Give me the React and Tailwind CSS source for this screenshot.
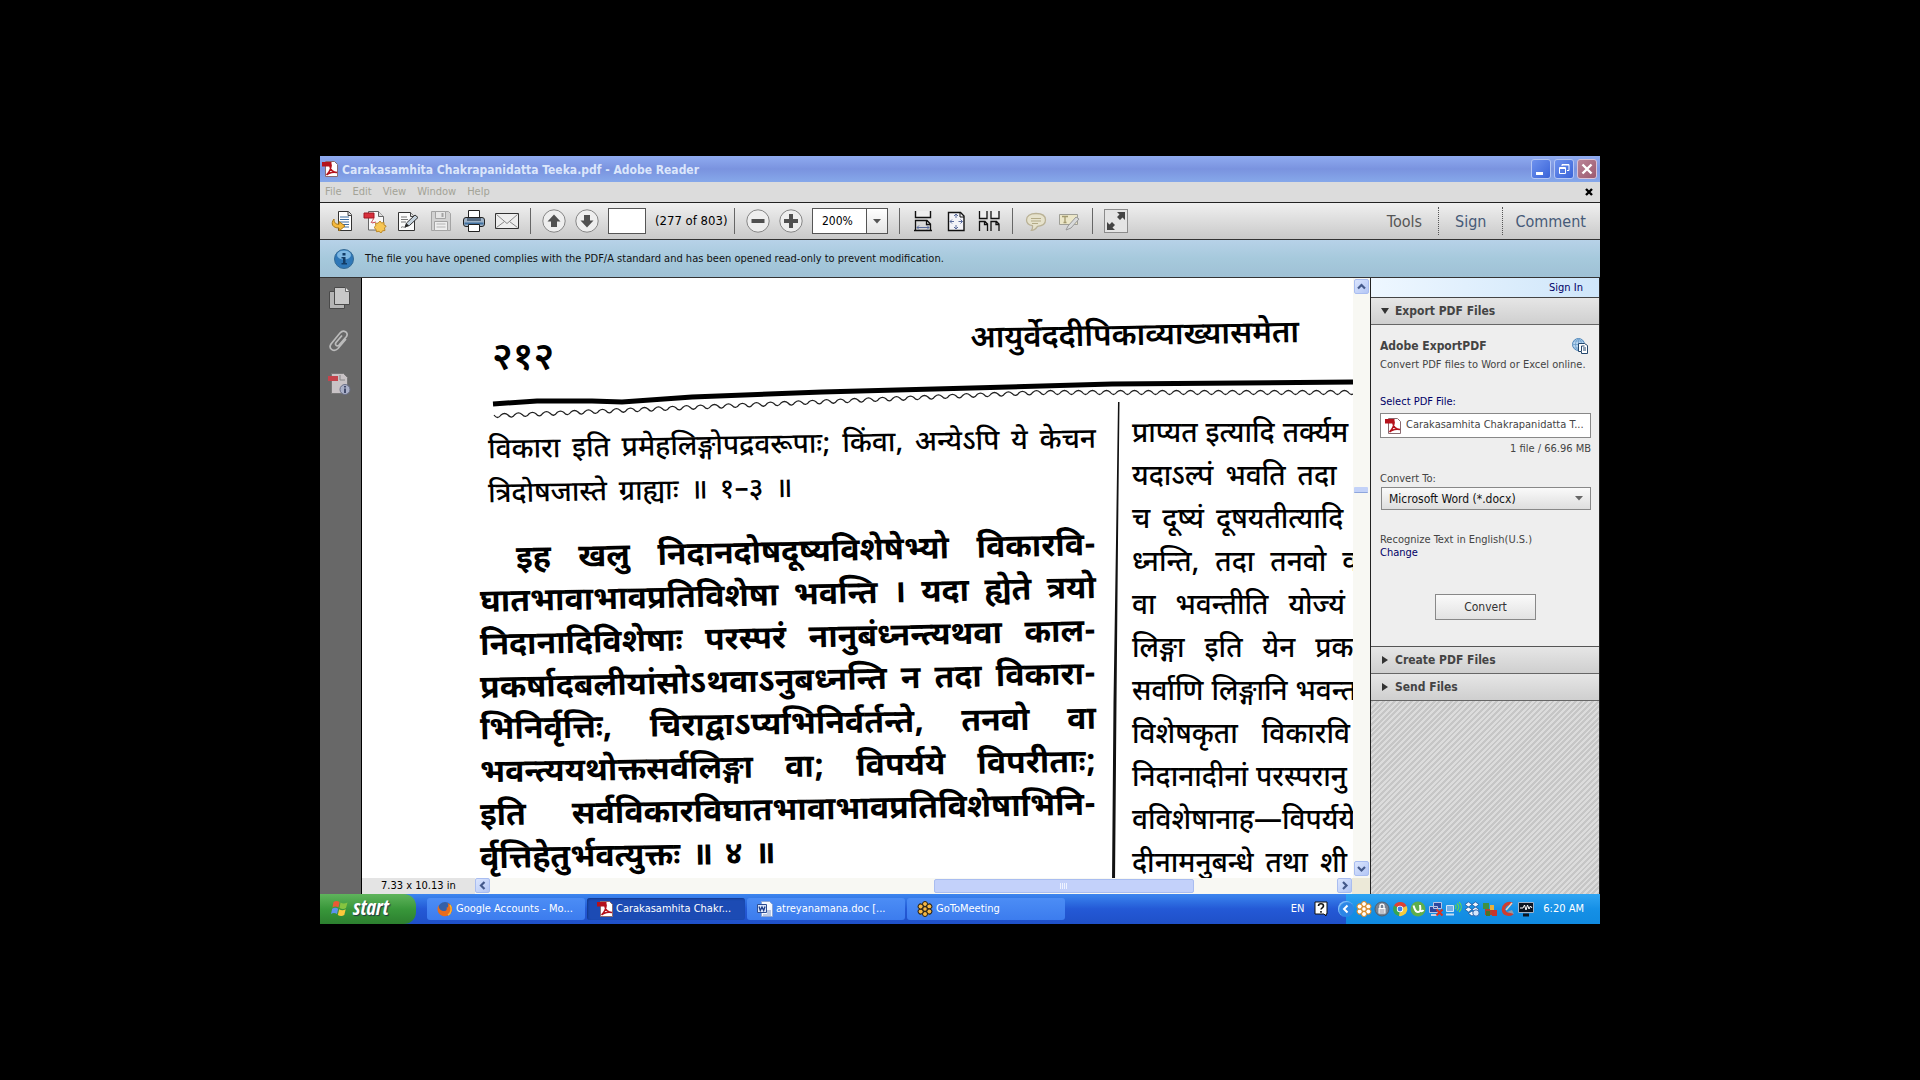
import React from "react";

const UI = "font-['DejaVu_Sans_Condensed','DejaVu_Sans',sans-serif] [font-stretch:condensed]";

function AcrobatIcon({ className }) {
  return (
    <svg viewBox="0 0 16 16" className={className} aria-hidden="true">
      <path d="M3.5.5h9l3 3v12h-12z" fill="#fff" stroke="#8a6a70" />
      <path d="M0 1h9.500v4.500H0z" fill="#b5121c" />
      <path d="M4.500 14C7 11.500 9 8 9 4.500c0-1.500-1.300-1.500-1.200 0C8 8.500 11 11.500 15 11.500c-3-.8-8-.3-10.500 2.500z" fill="none" stroke="#b5121c" strokeWidth="1.500" />
    </svg>
  );
}

function TitleBar() {
  return (
    <header className="flex h-[26px] shrink-0 items-center bg-linear-to-b from-[#8fabf0] via-[#7a93df] to-[#86a8ea] pr-[3px] pl-[2px]">
      <AcrobatIcon className="mr-1 size-4" />
      <h1 className="grow pt-px text-[12px] leading-4 font-bold whitespace-nowrap text-[#dbe6fb]">
        Carakasamhita Chakrapanidatta Teeka.pdf - Adobe Reader
      </h1>
      <div className="flex gap-[3px]">
        <button aria-label="Minimize" className="size-5 rounded-[3px] border border-[#b4c6f5] bg-linear-to-br from-[#6f92ee] to-[#3a63d8]">
          <svg viewBox="0 0 18 18"><path d="M4 12h7v3H4z" fill="#fff" /></svg>
        </button>
        <button aria-label="Restore" className="size-5 rounded-[3px] border border-[#b4c6f5] bg-linear-to-br from-[#6f92ee] to-[#3a63d8]">
          <svg viewBox="0 0 18 18" fill="none" stroke="#fff">
            <path d="M7 6V4.500h7v6h-2M7 5h7M4.500 7.500h6v6h-6zM4.500 8.500h6" />
          </svg>
        </button>
        <button aria-label="Close" className="size-5 rounded-[3px] border border-[#d9c3d8] bg-linear-to-br from-[#b98497] to-[#9c5a70]">
          <svg viewBox="0 0 18 18" stroke="#fff" strokeWidth="2.400"><path d="M4.500 4.500l9 9M13.500 4.500l-9 9" /></svg>
        </button>
      </div>
    </header>
  );
}

function MenuBar() {
  return (
    <nav className="flex h-5 shrink-0 items-center gap-[11px] bg-[#dcdcdc] pr-[7px] pl-[5px] text-[11px] text-[#a3a397]">
      {["File", "Edit", "View", "Window", "Help"].map((m) => (
        <button key={m}>{m}</button>
      ))}
      <button aria-label="Close document" className="ml-auto size-2">
        <svg viewBox="0 0 8 8" stroke="#000" strokeWidth="2.400"><path d="M1 1l6 6M7 1L1 7" /></svg>
      </button>
    </nav>
  );
}

const toolIcons = {
  Open: (
    <>
      <path d="M8.500 2.500h10l3 3v16h-13z" fill="#fff" stroke="#333" />
      <path d="M18 2.500v4h4" fill="#ddd" stroke="#444" />
      <path d="M10 8h9M10 10.500h9M10 13h9M12 15.500h7M14 18h5" stroke="#3d6c9d" />
      <path d="M4 10c-4 5-1 9 5 9v3l6-5-6-4.500v2.800c-3 .2-5-1.300-5-5.300z" fill="#f5b93e" stroke="#a97819" />
    </>
  ),
  "Create PDF": (
    <>
      <path d="M5.500 2.500h10l5 5v13.500h-15z" fill="#f8f8f8" stroke="#666" />
      <path d="M15.500 2.500v5h5" fill="#ddd" stroke="#666" />
      <path d="M1 4h10v5H1z" fill="#d8303c" stroke="#a01622" />
      <path d="M8 14c1-2 2-3 3-5M9 14l4-1" stroke="#c9444c" />
      <path d="M17 12l1.500 2 2.500-.5v2.500l2.200 1-1.700 2 .5 2.500-2.500.3L18 24l-2-1.700-2.500.5-.5-2.500L11 18.500l1.800-1.700-.3-2.500 2.600-.1z" fill="#f7c653" stroke="#bd8928" />
    </>
  ),
  Sign: (
    <>
      <path d="M2.500 3.500h12l4 4v14h-16z" fill="#fafafa" stroke="#333" />
      <path d="M14.500 3.500v4h4" fill="#ddd" stroke="#444" />
      <path d="M5 8h6M5 10.500h7M5 13h5M5 18.500c2-2 3 1 5-.5" stroke="#777" fill="none" />
      <path d="M9 18l1.500-4L19 6l3 2.500-8.500 8z" fill="#c5d2dd" stroke="#333" />
      <path d="M9 18l1.500-3.500 2.500 2z" fill="#222" />
    </>
  ),
  Save: (
    <>
      <path d="M2.500 2.500h17l2 2v17h-19z" fill="#d2d2d2" stroke="#a4a4a4" />
      <path d="M6.500 2.500h10v7h-10z" fill="#e6e6e6" stroke="#a4a4a4" />
      <path d="M12.500 4h2v4h-2z" fill="#a4a4a4" />
      <path d="M5.500 12.500h13v9h-13z" fill="#eee" stroke="#a4a4a4" />
      <path d="M7.500 15h9M7.500 18h9" stroke="#b4b4b4" />
    </>
  ),
  Print: (
    <>
      <path d="M6.500 9.500v-8h11v8" fill="#fff" stroke="#222" />
      <rect x="1.500" y="8.500" width="21" height="9" rx="2.500" fill="#9eb2c6" stroke="#222" />
      <path d="M5 9h14v3H5z" fill="#566a80" />
      <path d="M2.500 14.500h19" stroke="#3f6f9e" strokeWidth="2" />
      <path d="M6.500 15.500h11v7h-11z" fill="#fff" stroke="#222" />
    </>
  ),
  Email: (
    <>
      <path d="M.5 4.500h23v15H.5z" fill="#eee" stroke="#333" />
      <path d="M1.500 5.500l10.500 9 10.500-9M1.500 18.500l8-6M22.500 18.500l-8-6" fill="none" stroke="#888" />
    </>
  ),
  "Previous page": (
    <>
      <circle cx="12" cy="12" r="11.200" fill="#eee" stroke="#858585" />
      <path d="M12 5.500l6.500 7H15v5.500H9v-5.500H5.500z" fill="#505050" />
    </>
  ),
  "Next page": (
    <>
      <circle cx="12" cy="12" r="11.200" fill="#eee" stroke="#858585" />
      <path d="M12 18.500l6.500-7H15V6H9v5.500H5.500z" fill="#505050" />
    </>
  ),
  "Zoom out": (
    <>
      <circle cx="12" cy="12" r="11.200" fill="#eee" stroke="#858585" />
      <path d="M5.500 10h13v4h-13z" fill="#505050" />
    </>
  ),
  "Zoom in": (
    <>
      <circle cx="12" cy="12" r="11.200" fill="#eee" stroke="#858585" />
      <path d="M10 5h4v5h5v4h-5v5h-4v-5H5v-4h5z" fill="#505050" />
    </>
  ),
  "Fit width": (
    <>
      <path d="M4.500 2v6.500h15V2" fill="#eee" stroke="#111" strokeWidth="1.400" />
      <path d="M4.500 22V11.500H16l3.500 3.500v7M15.500 12v3.500H19M3 21.500h18" fill="none" stroke="#111" strokeWidth="1.300" />
      <path d="M6 18.500h12M8 16.500l-2 2 2 2M16 16.500l2 2-2 2" fill="none" stroke="#5a6b9c" />
    </>
  ),
  "Fit page": (
    <>
      <path d="M4.500 3.500h12l3.500 3.500v14.500H4.500z" fill="#f3f3f8" stroke="#111" strokeWidth="1.400" />
      <path d="M16 4v4h4" fill="none" stroke="#111" />
      <path d="M12 5v4M10 7l2-2 2 2M12 20v-4M10 18l2 2 2-2M6 12.500h4M8 10.500l-2 2 2 2M18.500 12.500h-4M16.500 10.500l2 2-2 2" fill="none" stroke="#5a6b9c" />
    </>
  ),
  "Two-up": (
    <>
      <path d="M2.500 2v7.500H10V2M14 2v7.500h8V2" fill="#eee" stroke="#111" strokeWidth="1.300" />
      <path d="M2.500 22V12.500H8l2.500 2.500v7M7.500 13v2.500H10M14 22V12.500h5.500L22 15v7M19 13v2.500h3" fill="none" stroke="#111" strokeWidth="1.300" />
    </>
  ),
  "Add comment": (
    <>
      <path d="M12 4.500c6 0 9.500 2.500 9.500 6.500s-3.500 6-8 6.300c-2 3-4 4-6 4 1-1.300 1.300-3 1-4.600C4.500 16 2.500 14 2.500 11c0-4 3.500-6.500 9.500-6.500z" fill="#e6e2cc" stroke="#b9b195" strokeWidth="1.300" />
      <path d="M7 9.500h10M7 12h10M8 14.500h6" stroke="#b3aa86" />
    </>
  ),
  Highlight: (
    <>
      <path d="M2.500 5.500h18v10h-18z" fill="#ebe6c8" stroke="#9f9f96" />
      <path d="M5 7.500h6M8 7.500v6M6.500 13.500h3" stroke="#a39a6f" strokeWidth="1.300" />
      <path d="M9 21l2-4 8-9 3 2-8 9z" fill="#d8dadb" stroke="#999" />
    </>
  ),
  "Read mode": (
    <>
      <rect x=".5" y=".5" width="23" height="23" fill="#e4e4e4" stroke="#8b8b8b" />
      <path d="M13 3h8v8l-2.500-2.500-2.500 2.500-3-3 2.500-2.500zM3 13l2.500 2.500L8 13l3 3-2.500 2.500L11 21H3z" fill="#444" />
    </>
  ),
};

function Tool({ name }) {
  return (
    <button aria-label={name} className="size-6 shrink-0">
      <svg viewBox="0 0 24 24">{toolIcons[name]}</svg>
    </button>
  );
}

const Sep = () => <span className="mx-[2px] h-[26px] w-px shrink-0 bg-[#666]" />;

function Toolbar() {
  return (
    <div className="flex h-[37px] shrink-0 items-center gap-[9px] border-t border-[#222] bg-linear-to-b from-[#f0f0f0] to-[#c9c9c9] pl-[10px]">
      <Tool name="Open" />
      <Tool name="Create PDF" />
      <Tool name="Sign" />
      <Tool name="Save" />
      <Tool name="Print" />
      <Tool name="Email" />
      <Sep />
      <Tool name="Previous page" />
      <Tool name="Next page" />
      <input aria-label="Page number" defaultValue="" className="h-[26px] w-[38px] shrink-0 border border-[#555] bg-white text-center text-[13px]" />
      <span className="w-[68px] shrink-0 text-[13px] whitespace-nowrap">(277 of 803)</span>
      <Sep />
      <Tool name="Zoom out" />
      <Tool name="Zoom in" />
      <div className="relative h-[26px] w-[76px] shrink-0">
        <select aria-label="Zoom" className="size-full appearance-none border border-[#555] bg-white pl-[9px] text-[12px]">
          <option>200%</option>
        </select>
        <span className="pointer-events-none absolute inset-y-px right-px flex w-[21px] items-center justify-center border-l border-[#555] bg-linear-to-b from-white to-[#e4e4e4]">
          <svg viewBox="0 0 8 5" className="w-2"><path d="M0 0h8L4 4.500z" fill="#555" /></svg>
        </span>
      </div>
      <Sep />
      <Tool name="Fit width" />
      <Tool name="Fit page" />
      <Tool name="Two-up" />
      <Sep />
      <Tool name="Add comment" />
      <Tool name="Highlight" />
      <Sep />
      <Tool name="Read mode" />
      <div className="ml-auto flex h-7 items-center text-[16px] text-[#465a78]">
        <button className="pr-4 pt-px text-[#555]">Tools</button>
        <button className="h-full border-x border-dotted border-[#555] px-4 pt-px">Sign</button>
        <button className="pt-px pr-[14px] pl-3">Comment</button>
      </div>
    </div>
  );
}

function InfoBar() {
  return (
    <div role="status" className="flex h-[39px] shrink-0 items-center gap-[11px] border-y border-[#333] bg-linear-to-b from-[#b7d2e8] via-[#a6c9dc] to-[#9fc1d5] pl-[14px] text-[11px] text-[#111]">
      <svg viewBox="0 0 20 20" className="size-5" aria-hidden="true">
        <circle cx="10" cy="10" r="9.500" fill="#2f78b8" stroke="#346a95" />
        <ellipse cx="10" cy="6" rx="7" ry="4.500" fill="#7db7e2" />
        <path d="M8.500 4h3v2.500h-3zM7.500 8h4v6H13v1.500H7.500V14H9V9.500H7.500z" fill="#123c66" />
      </svg>
      <p className="pt-0.5 whitespace-nowrap">
        The file you have opened complies with the PDF/A standard and has been opened read-only to prevent modification.
      </p>
    </div>
  );
}

function NavRail() {
  return (
    <aside className="flex w-[42px] shrink-0 flex-col items-center gap-[19px] border-r border-black bg-[#686868] pt-2 pr-1">
      <button aria-label="Page thumbnails" className="size-6">
        <svg viewBox="0 0 24 24">
          <path d="M2.500 5.500h15v17h-15z" fill="#b5b5b5" stroke="#4a4a4a" />
          <path d="M7.500 1.500h11l4 4v13h-15z" fill="#c8c8c8" stroke="#4a4a4a" />
          <path d="M18.500 1.500v4h4" fill="#eee" stroke="#666" />
        </svg>
      </button>
      <button aria-label="Attachments" className="size-6">
        <svg viewBox="0 0 24 24" fill="none" stroke="#bbb" strokeWidth="1.700">
          <path d="M19 10l-8 9.500c-4 4-10 .5-7-4.500L13 4c3.500-4 9-.5 6.500 3.500L12 16c-2 2-4.500 0-3-2.500l6-7" />
        </svg>
      </button>
      <button aria-label="Standards" className="size-6">
        <svg viewBox="0 0 24 24">
          <path d="M4.500 1.500h12l4 4v16h-16z" fill="#c9c3c6" stroke="#777" />
          <path d="M1 4h10v5H1z" fill="#c4444c" />
          <path d="M13 3v5h5" fill="none" stroke="#888" />
          <circle cx="18" cy="17.500" r="5" fill="#aab0c8" stroke="#6a6f86" />
          <path d="M17 14h2v1.500h-2zM17 16.500h2V21h-2z" fill="#444c6c" />
        </svg>
      </button>
    </aside>
  );
}

const introLines = [
  { text: "विकारा इति प्रमेहलिङ्गोपद्रवरूपाः; किंवा, अन्येऽपि ये केचन", cls: "justify-between -rotate-1" },
  { text: "त्रिदोषजास्ते ग्राह्याः ॥ १–३ ॥", cls: "gap-3 -rotate-1" },
];

const verseLines = [
  { text: "इह खलु निदानदोषदूष्यविशेषेभ्यो विकारवि-", cls: "justify-between pl-9 rotate-[-1.3deg]" },
  { text: "घातभावाभावप्रतिविशेषा भवन्ति । यदा ह्येते त्रयो", cls: "justify-between rotate-[-1.3deg]" },
  { text: "निदानादिविशेषाः परस्परं नानुबंध्नन्त्यथवा काल-", cls: "justify-between rotate-[-1.3deg]" },
  { text: "प्रकर्षादबलीयांसोऽथवाऽनुबध्नन्ति न तदा विकारा-", cls: "justify-between rotate-[-1.3deg]" },
  { text: "भिनिर्वृत्तिः, चिराद्वाऽप्यभिनिर्वर्तन्ते, तनवो वा", cls: "justify-between -rotate-1" },
  { text: "भवन्त्ययथोक्तसर्वलिङ्गा वा; विपर्यये विपरीताः;", cls: "justify-between -rotate-1" },
  { text: "इति सर्वविकारविघातभावाभावप्रतिविशेषाभिनि-", cls: "justify-between -rotate-1" },
  { text: "र्वृत्तिहेतुर्भवत्युक्तः ॥ ४ ॥", cls: "gap-3 -rotate-1" },
];

const commentaryLines = [
  { text: "प्राप्यत इत्यादि तर्क्यम", cls: "gap-2" },
  { text: "यदाऽल्पं भवति तदा", cls: "gap-3" },
  { text: "च दूष्यं दूषयतीत्यादि", cls: "gap-3" },
  { text: "ध्नन्ति, तदा तनवो व", cls: "gap-4" },
  { text: "वा भवन्तीति योज्यं", cls: "gap-5" },
  { text: "लिङ्गा इति येन प्रक", cls: "gap-5" },
  { text: "सर्वाणि लिङ्गानि भवन्त", cls: "gap-2" },
  { text: "विशेषकृता विकारवि", cls: "gap-6" },
  { text: "निदानादीनां परस्परानु", cls: "gap-2" },
  { text: "वविशेषानाह—विपर्यये", cls: "" },
  { text: "दीनामनुबन्धे तथा शी", cls: "gap-3" },
];

function Line({ line, height }) {
  return (
    <p className={"flex items-center leading-8 whitespace-nowrap " + height + " " + line.cls}>
      {line.text.split(" ").map((w, i) => (
        <span key={i}>{w}</span>
      ))}
    </p>
  );
}

const wave = "M2 39" + Array.from({ length: 62 }, (_, i) => {
  const x = 2 + i * 14;
  const y = Math.max(16, 39 - i * 0.6);
  return `Q${x + 3.5} ${y + 5} ${x + 7} ${y}Q${x + 10.5} ${y - 3} ${x + 14} ${y}`;
}).join("");

function ScannedPage() {
  return (
    <article lang="sa" className="min-h-0 grow overflow-hidden bg-white font-['Noto_Sans_Devanagari','Noto_Sans',sans-serif] text-black">
      <div className="flex h-[98px] items-start justify-between pr-[54px] pl-[130px]">
        <span className="pt-16 text-[38px] leading-9 font-semibold">२१२</span>
        <h2 className="-rotate-1 pt-[42px] text-[31px] leading-9 font-semibold whitespace-nowrap">आयुर्वेददीपिकाव्याख्यासमेता</h2>
      </div>
      <svg viewBox="0 0 861 44" preserveAspectRatio="none" className="ml-[130px] h-11 w-[calc(100%-130px)]" aria-hidden="true">
        <path d="M1 28L45 25 100 25 130 26 200 21 330 16 480 12 620 8 861 6" fill="none" stroke="#000" strokeWidth="5" />
        <path d={wave} fill="none" stroke="#222" strokeWidth="1.300" />
      </svg>
      <div className="flex pl-[118px]">
        <div className="w-[616px] shrink-0">
          <div className="pt-1 pl-2 text-[28px] font-medium">
            {introLines.map((l, i) => <Line key={i} line={l} height="h-11" />)}
          </div>
          <div className="pt-5 text-[32px] font-bold">
            {verseLines.map((l, i) => <Line key={i} line={l} height="h-[43px]" />)}
          </div>
        </div>
        <svg viewBox="0 0 10 480" preserveAspectRatio="none" className="-mt-[18px] ml-[14px] h-[480px] w-[10px] shrink-0" aria-hidden="true">
          <path d="M8 0h1.500L8 140 6.500 300 5 480H2L3.500 300 6 140z" fill="#111" />
        </svg>
        <div className="-mt-[7px] pl-[12px] text-[28px] font-medium">
          {commentaryLines.map((l) => <Line key={l.text} line={l} height="h-[43px]" />)}
        </div>
      </div>
    </article>
  );
}

function ScrollButton({ label, d }) {
  return (
    <button aria-label={label} className="size-[15px] shrink-0 rounded-[2px] border border-[#a9bdf0] bg-linear-to-br from-[#dbe5fd] to-[#b3c6f5]">
      <svg viewBox="0 0 13 13" fill="none" stroke="#44598a" strokeWidth="2.200"><path d={d} /></svg>
    </button>
  );
}

function Viewer() {
  return (
    <main className="flex min-w-0 grow flex-col">
      <div className="flex min-h-0 grow">
        <div className="flex min-w-0 grow flex-col">
          <ScannedPage />
        </div>
        <div className="flex w-[17px] shrink-0 flex-col items-center bg-[#f8f8f3] pt-px pb-0.5">
          <ScrollButton label="Scroll up" d="M3 8.500L6.500 5 10 8.500" />
          <div className="grow-[195]" />
          <div className="h-[6px] w-[14px] rounded-[1px] border-b border-[#8ea6dc] bg-[#c3d2f8]" />
          <div className="grow-[372]" />
          <ScrollButton label="Scroll down" d="M3 5l3.500 3.500L10 5" />
        </div>
      </div>
      <div className="flex h-4 shrink-0 items-center bg-[#f8f8f3]">
        <span className="flex h-full w-[113px] shrink-0 items-center bg-[#e4e4e4] pl-[19px] text-[11px] whitespace-nowrap">7.33 x 10.13 in</span>
        <ScrollButton label="Scroll left" d="M8.500 3L5 6.500 8.500 10" />
        <div className="grow-[443]" />
        <div className="flex h-[14px] w-[260px] items-center justify-center gap-px rounded-[2px] border border-[#a9bdf0] bg-[#c3d1fa]">
          {[0, 1, 2, 3].map((i) => <span key={i} className="h-[6px] w-px bg-[#eef3ff]" />)}
        </div>
        <div className="grow-[143]" />
        <ScrollButton label="Scroll right" d="M5 3l3.500 3.500L5 10" />
        <span className="h-full w-[18px] shrink-0 bg-[#ece9d8]" />
      </div>
    </main>
  );
}

function SectionHeader({ open, children }) {
  return (
    <h3 className="border-b border-[#666] bg-linear-to-b from-[#e6e6e6] to-[#cfcfcf] text-[12px] font-bold text-[#444]">
      <button className="flex h-[26px] w-full items-center gap-[6px] pl-[10px]" aria-expanded={!!open}>
        <svg viewBox="0 0 8 8" className="size-2">
          <path d={open ? "M0 1h8L4 7z" : "M1 0l6 4-6 4z"} fill="#333" />
        </svg>
        {children}
      </button>
    </h3>
  );
}

function ToolsPanel() {
  return (
    <aside className="flex w-[230px] shrink-0 flex-col border-x border-[#222] bg-[#eee] text-[11px] text-[#444]">
      <div className="flex h-5 items-center justify-end border-b border-[#444] bg-linear-to-r from-[#eef7ff] to-[#cfe6fa] pt-0.5 pr-4">
        <a href="#signin" className="text-[#000066]">Sign In</a>
      </div>
      <SectionHeader open>Export PDF Files</SectionHeader>
      <form className="flex flex-col border-b border-[#555] pr-[8px] pb-[26px] pl-[9px]" onSubmit={(e) => e.preventDefault()}>
        <div className="flex items-center justify-between pt-[13px] pr-[3px]">
          <h4 className="text-[12px] leading-4 font-bold">Adobe ExportPDF</h4>
          <svg viewBox="0 0 16 16" className="size-4" aria-hidden="true">
            <circle cx="6.500" cy="6.500" r="6" fill="#b9d6f0" stroke="#4f86b8" />
            <path d="M.5 6.500h12M6.500.5v12M2 3h9M2 10h9M6.500.5c-4 3-4 9 0 12M6.500.5c4 3 4 9 0 12" fill="none" stroke="#6b9dca" strokeWidth=".8" />
            <path d="M6.500 5.500h6l3 2v8h-6v-2h-3z" fill="#fff" stroke="#24476c" />
            <path d="M9.500 13V8h3M11 10h3M11 12h3" stroke="#24476c" fill="none" />
          </svg>
        </div>
        <p className="pt-[3px] leading-4 whitespace-nowrap">Convert PDF files to Word or Excel online.</p>
        <label htmlFor="pdf" className="pt-[21px] leading-4 text-[#000066]">Select PDF File:</label>
        <div className="mt-[3px] flex h-[25px] items-center border border-[#888] bg-white pr-1 pl-1">
          <AcrobatIcon className="mr-[5px] size-4 shrink-0" />
          <input id="pdf" readOnly value="Carakasamhita Chakrapanidatta T..." className="min-w-0 grow" />
        </div>
        <p className="pt-[3px] text-right leading-4">1 file / 66.96 MB</p>
        <label htmlFor="format" className="pt-[14px] leading-4">Convert To:</label>
        <div className="relative ml-px">
          <select id="format" className="h-[23px] w-full appearance-none border border-[#888] bg-linear-to-b from-[#fafafa] to-[#dedede] pl-[7px] text-[12px] text-[#111]">
            <option>Microsoft Word (*.docx)</option>
          </select>
          <svg viewBox="0 0 8 5" className="pointer-events-none absolute top-[9px] right-2 w-2"><path d="M0 0h8L4 4.500z" fill="#666" /></svg>
        </div>
        <p className="pt-[22px] leading-4">Recognize Text in English(U.S.)</p>
        <a href="#change" className="leading-[10px] text-[#000066]">Change</a>
        <button className="mt-9 h-[26px] w-[101px] self-center border border-[#888] bg-linear-to-b from-[#fafafa] to-[#e2e2e2] text-[12px] text-[#333]">Convert</button>
      </form>
      <SectionHeader>Create PDF Files</SectionHeader>
      <SectionHeader>Send Files</SectionHeader>
      <div className="grow bg-[repeating-linear-gradient(135deg,#c6c6c6_0px,#c6c6c6_2px,#dcdcdc_2px,#dcdcdc_4px)]" />
    </aside>
  );
}

function Daisy({ className, petal, core }) {
  return (
    <svg viewBox="0 0 16 16" className={className} aria-hidden="true">
      {[0, 60, 120, 180, 240, 300].map((a) => (
        <circle key={a} cx="8" cy="3" r="2.500" fill={petal} stroke={core} transform={`rotate(${a} 8 8)`} />
      ))}
      <circle cx="8" cy="8" r="2.300" fill={petal} stroke={core} />
    </svg>
  );
}

const Firefox = (
  <svg viewBox="0 0 16 16" className="size-4 shrink-0" aria-hidden="true">
    <circle cx="8" cy="8" r="7" fill="#3560a8" />
    <path d="M1.500 4c0 3 1.500 5.500 4.500 6 3 .5 4.500-1.500 3.500-3.500 1.500.5 2.500-2 1-4.500 4 1.500 5.500 5 4.300 8.500C13 15 7 17 3 13.500 0 11 0 7 1.500 4z" fill="#e86c1c" />
    <path d="M13 4c2 3 1.500 8-2 10" stroke="#f7b733" fill="none" strokeWidth="1.500" />
  </svg>
);

const Word = (
  <svg viewBox="0 0 16 16" className="size-4 shrink-0" aria-hidden="true">
    <path d="M4.500.5h8l3 3v12h-11z" fill="#f5f8ff" stroke="#8ba5d6" />
    <path d="M10 10h4M10 12h4M6 14h8" stroke="#7f99c9" />
    <path d="M.5 3.500h9v8h-9z" fill="#dbe6fa" stroke="#2c4c92" />
    <path d="M2 5.500l1.300 4L5 6l1.700 3.500L8 5.500" fill="none" stroke="#1f3f8c" strokeWidth="1.300" />
  </svg>
);

const tasks = [
  { label: "Google Accounts - Mo...", icon: Firefox },
  { label: "Carakasamhita Chakr...", icon: <AcrobatIcon className="size-4 shrink-0" />, active: true },
  { label: "atreyanamana.doc [...", icon: Word },
  { label: "GoToMeeting", icon: <Daisy className="size-4 shrink-0" petal="#f6b845" core="#2a2010" /> },
];

const trayIcons = [
  <Daisy key="a" className="size-4" petal="#fff" core="#e08a22" />,
  <svg key="b" viewBox="0 0 16 16" className="size-4">
    <circle cx="8" cy="8" r="7" fill="#778393" stroke="#50606f" />
    <path d="M4.500 7h7v5.500h-7z" fill="#fff" /><path d="M6 7V5c0-2.500 4-2.500 4 0v2" fill="none" stroke="#fff" strokeWidth="1.400" />
    <path d="M5.500 9h5M5.500 11h5" stroke="#667" strokeWidth=".8" />
  </svg>,
  <svg key="c" viewBox="0 0 16 16" className="size-4">
    <path d="M8 8L2 4.500A7 7 0 0 1 14.500 5z" fill="#df4232" />
    <path d="M8 8l-6-3.500A7 7 0 0 0 7 15z" fill="#36a552" />
    <path d="M8 8l6.500-3A7 7 0 0 1 7 15z" fill="#f6cb3d" />
    <circle cx="8" cy="8" r="3.200" fill="#fff" /><circle cx="8" cy="8" r="2.400" fill="#3f7fe8" />
  </svg>,
  <svg key="d" viewBox="0 0 16 16" className="size-4">
    <circle cx="8" cy="8" r="7.500" fill="#5fae4b" />
    <path d="M3.500 4.500C5 8.500 5 11 8 11s2.500-3 2-7M10.500 9.500c1 1 2 .8 3-.5" fill="none" stroke="#fff" strokeWidth="2" />
  </svg>,
  <svg key="e" viewBox="0 0 16 16" className="size-4">
    <path d="M5.500 1.500h8v6h-8zM1.500 5.500h8v6h-8z" fill="#2b479f" stroke="#b8c4e4" />
    <path d="M3 14h7" stroke="#c7cfe5" strokeWidth="2" />
    <path d="M8.500 8.500l6 6M14.500 8.500l-6 6" stroke="#e0301c" strokeWidth="2" />
  </svg>,
  <svg key="f" viewBox="0 0 16 16" className="size-4">
    <path d="M.5 4.500h7v6h-7z" fill="#75aee6" stroke="#d0e4f8" /><path d="M0 13.500h8" stroke="#c5dbf2" strokeWidth="2" />
    <path d="M9 4c1.500 1 1.500 3 0 4M11 2.500c2.500 2 2.500 5 0 7M13 1c3 3 3 7 0 10" fill="none" stroke="#62d84c" strokeWidth="1.200" />
  </svg>,
  <svg key="g" viewBox="0 0 16 16" className="size-4">
    <path d="M4.500 1L8 3.500 4.500 6 1 3.500zM11.500 1L15 3.500 11.500 6 8 3.500zM4.500 6L8 8.500 4.500 11 1 8.500zM11.500 6L15 8.500 11.500 11 8 8.500zM8 10l3.500 2.500L8 15l-3.500-2.500z" fill="#f1f7ff" stroke="#17498f" strokeWidth=".7" />
    <circle cx="12" cy="12" r="3.200" fill="#d4e6fb" stroke="#2b66b2" />
  </svg>,
  <svg key="h" viewBox="0 0 16 16" className="size-4">
    <path d="M1 2h6v6H1z" fill="#3f9142" /><path d="M3 8h7v6H3z" fill="#b6442a" />
    <path d="M8 4h4v5H8z" fill="#e8b13d" /><path d="M10 9h5v6h-5z" fill="#c8352c" /><path d="M4 10h4v5H4z" fill="#49752c" />
  </svg>,
  <svg key="i" viewBox="0 0 16 16" className="size-4">
    <path d="M12 3C7 1 3 5 3.500 9s5 5.500 9 3" fill="none" stroke="#cf3d30" strokeWidth="3.500" />
    <path d="M6 9l6-7" stroke="#e9d7c5" strokeWidth="1.500" /><path d="M7 11l5-2 2 4z" fill="#8e9cae" />
  </svg>,
  <svg key="j" viewBox="0 0 16 16" className="size-4">
    <path d="M.5 1.500h15v10H.5z" fill="#0c1420" stroke="#9fb2c9" /><path d="M5 14h6" stroke="#0c1420" strokeWidth="3" />
    <path d="M2 7h3l1.500-3L8 9l1.500-5L11 8l1.500-3L14 7" fill="none" stroke="#fff" />
  </svg>,
];

function Taskbar() {
  return (
    <footer className="flex h-[30px] shrink-0 bg-linear-to-b from-[#3d86ef] via-[#2459d6] to-[#1f50c8] text-[11px] text-white">
      <button className="mr-[11px] flex w-24 shrink-0 items-center gap-1 rounded-r-xl bg-linear-to-b from-[#5fb45c] via-[#38973a] to-[#2c7f2f] pb-0.5 pl-[11px] font-['Open_Sans',sans-serif] text-[21px] leading-none font-bold italic [text-shadow:1px_1px_1px_#234]">
        <svg viewBox="0 0 18 18" className="size-[18px] shrink-0" aria-hidden="true">
          <path d="M2.500 3c2-1.500 4-1.500 6 0L7.500 8.500c-2-1.300-4-1.300-6 0z" fill="#ea5a35" />
          <path d="M9.500 3.500c2 1.200 4 1.200 7 0l-1.500 5.500c-2 1.200-4 1.200-6.500 0z" fill="#86c440" />
          <path d="M1.200 9.800c2-1.500 4-1.500 6 0L6 15c-2-1.300-4-1.300-6 0z" fill="#5b93ef" />
          <path d="M8.200 10.200c2 1.300 4.300 1.300 6.500 0L13.300 16c-2 1.200-4.300 1.200-6.500 0z" fill="#fbc83c" />
        </svg>
        start
      </button>
      <div className="flex w-[638px] shrink-0 gap-[2px] py-1">
        {tasks.map((t) => (
          <button
            key={t.label}
            className={
              "flex min-w-0 flex-1 items-center gap-[3px] rounded-[3px] pl-[10px] whitespace-nowrap " +
              (t.active ? "bg-[#1c4bb4] shadow-[inset_1px_1px_2px_#123a8e]" : "bg-linear-to-b from-[#4c8df5] to-[#3c7cee]")
            }
          >
            {t.icon}
            {t.label}
          </button>
        ))}
      </div>
      <div className="ml-auto flex items-center gap-[10px] pr-[18px]">
        <span>EN</span>
        <svg viewBox="0 0 14 16" className="h-4 w-[14px]" aria-label="Help">
          <path d="M1 1h12v12h-1v2l-2-2H1z" fill="#fff" stroke="#111" />
          <path d="M4.500 5c0-3 5-3 5 0 0 1.800-2.500 1.800-2.500 3.500M7 10v1.800" fill="none" stroke="#111" strokeWidth="1.600" />
        </svg>
      </div>
      <div className="flex shrink-0 items-center bg-linear-to-b from-[#2fa5f3] via-[#1590e6] to-[#108ae0] pr-4">
        <button aria-label="Show hidden icons" className="-ml-2 size-4 rounded-full bg-[#2b86e6] shadow-[inset_1px_1px_1px_#8cc4fa]">
          <svg viewBox="0 0 16 16" fill="none" stroke="#fff" strokeWidth="2"><path d="M9.500 4.500L6 8l3.500 3.500" /></svg>
        </button>
        <div className="ml-[2px] flex gap-[2px]">{trayIcons}</div>
        <time className="ml-[9px] whitespace-nowrap">6:20 AM</time>
      </div>
    </footer>
  );
}

export default function App() {
  return (
    <div className="flex min-h-screen items-center justify-center bg-black">
      <div className={"flex aspect-[5/3] w-2/3 flex-col overflow-hidden text-black " + UI}>
        <TitleBar />
        <MenuBar />
        <Toolbar />
        <InfoBar />
        <div className="flex min-h-0 grow">
          <NavRail />
          <Viewer />
          <ToolsPanel />
        </div>
        <Taskbar />
      </div>
    </div>
  );
}
